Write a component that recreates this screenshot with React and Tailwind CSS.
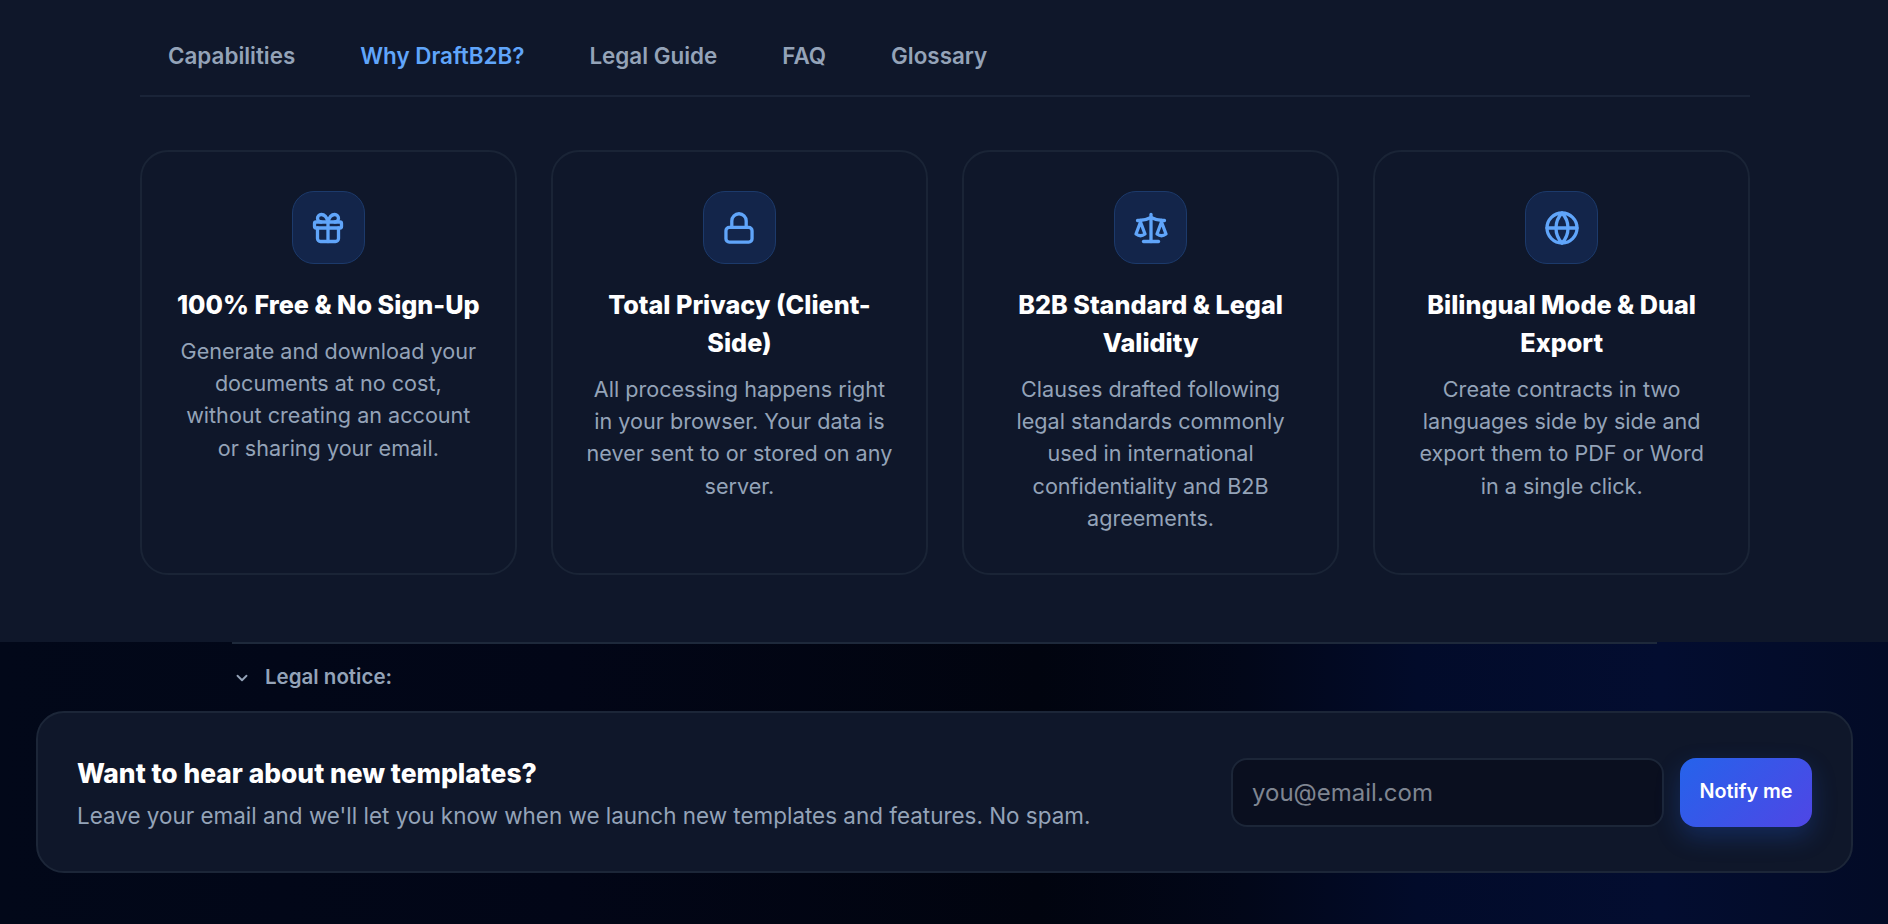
import React from "react";
import { Gift, Scale, Globe, ChevronDown } from "lucide-react";

function LockIcon({ className, strokeWidth }) {
  return (
    <svg viewBox="0 0 24 24" fill="none" stroke="currentColor" strokeWidth={strokeWidth} strokeLinecap="round" strokeLinejoin="round" className={className}>
      <rect x="3.3" y="11.6" width="17.4" height="9.8" rx="2.2" />
      <path d="M7.2 11.6V7.3a4.8 4.8 0 0 1 9.6 0v4.3" />
    </svg>
  );
}

const tabs = ["Capabilities", "Why DraftB2B?", "Legal Guide", "FAQ", "Glossary"];
const cards = [
  { Icon: Gift, title: "100% Free & No Sign-Up", body: "Generate and download your documents at no cost, without creating an account or sharing your email." },
  { Icon: LockIcon, title: "Total Privacy (Client-Side)", body: "All processing happens right in your browser. Your data is never sent to or stored on any server." },
  { Icon: Scale, title: "B2B Standard & Legal Validity", body: "Clauses drafted following legal standards commonly used in international confidentiality and B2B agreements." },
  { Icon: Globe, title: "Bilingual Mode & Dual Export", body: "Create contracts in two languages side by side and export them to PDF or Word in a single click." },
];

export default function App() {
  return (
    <div className="h-[924px] overflow-hidden bg-[#020617] font-['Inter',sans-serif]">
      <section className="h-[642px] bg-[#0f172a] pl-[140px] pr-[138px]">
        <nav className="flex h-[97px] items-center gap-[9px] border-b-2 border-[#1a2438] pl-[28px] pt-[17px]">
          {tabs.map((t, i) => (
            <span key={t} className={`px-[28px] first:pl-0 text-[22.4px] font-semibold ${i === 1 ? "text-[#60a5fa]" : "text-[#94a3b8]"}`}>{t}</span>
          ))}
        </nav>
        <div className="mt-[53px] grid h-[425px] grid-cols-4 gap-[34.5px]">
          {cards.map(({ Icon, title, body }) => (
            <div key={title} className="flex flex-col items-center rounded-[28px] border-2 border-[#1a2436] bg-[#0f172a] px-[33px] pt-[39px] text-center">
              <div className="flex h-[73px] w-[73px] items-center justify-center rounded-[22px] border border-[#1c3a6b] bg-[#13254a]">
                <Icon className="h-[36px] w-[36px] text-[#60a5fa]" strokeWidth={2.2} />
              </div>
              <h3 className="mt-[22px] text-[25.2px] font-extrabold leading-[38px] text-white">{title}</h3>
              <p className="mt-[10.5px] text-[21.6px] leading-[32.4px] text-[#94a3b8]">{body}</p>
            </div>
          ))}
        </div>
      </section>
      <section className="h-[282px] bg-[linear-gradient(90deg,#020819_0%,#020617_30%,#01040f_55%,#020719_66%,#020b2a_75%,#030d30_88%,#030b26_100%)] pl-[36px] pr-[35px]">
        <div className="mx-[196px] border-t-2 border-[#1e293b]" />
        <div className="flex h-[67px] items-center gap-[14px] pl-[197px] text-[20.5px] font-semibold text-[#94a3b8]">
          <ChevronDown className="h-[18px] w-[18px]" strokeWidth={2.5} />
          <span>Legal notice:</span>
        </div>
        <div className="flex h-[162px] items-center justify-between rounded-[28px] border-2 border-[#1c2638] bg-[#0f172a] pl-[39px] pr-[39px]">
          <div className="pt-[4px]">
            <h3 className="text-[26.4px] font-extrabold leading-[32px] text-white">Want to hear about new templates?</h3>
            <p className="mt-[11px] text-[22.45px] leading-[32px] text-[#94a3b8]">Leave your email and we'll let you know when we launch new templates and features. No spam.</p>
          </div>
          <div className="flex gap-[16px]">
            <input readOnly placeholder="you@email.com" className="h-[69px] w-[433px] rounded-[16px] border-2 border-[#1c2638] bg-[#0a0f1f] px-[19px] text-[24px] text-white outline-none placeholder:text-[#7f8591]" />
            <button className="h-[69px] w-[132px] rounded-[16px] bg-[linear-gradient(135deg,#2563eb,#4f46e5)] text-[19.8px] font-semibold text-white shadow-[0_10px_25px_rgba(37,99,235,0.25)]">Notify me</button>
          </div>
        </div>
      </section>
    </div>
  );
}
